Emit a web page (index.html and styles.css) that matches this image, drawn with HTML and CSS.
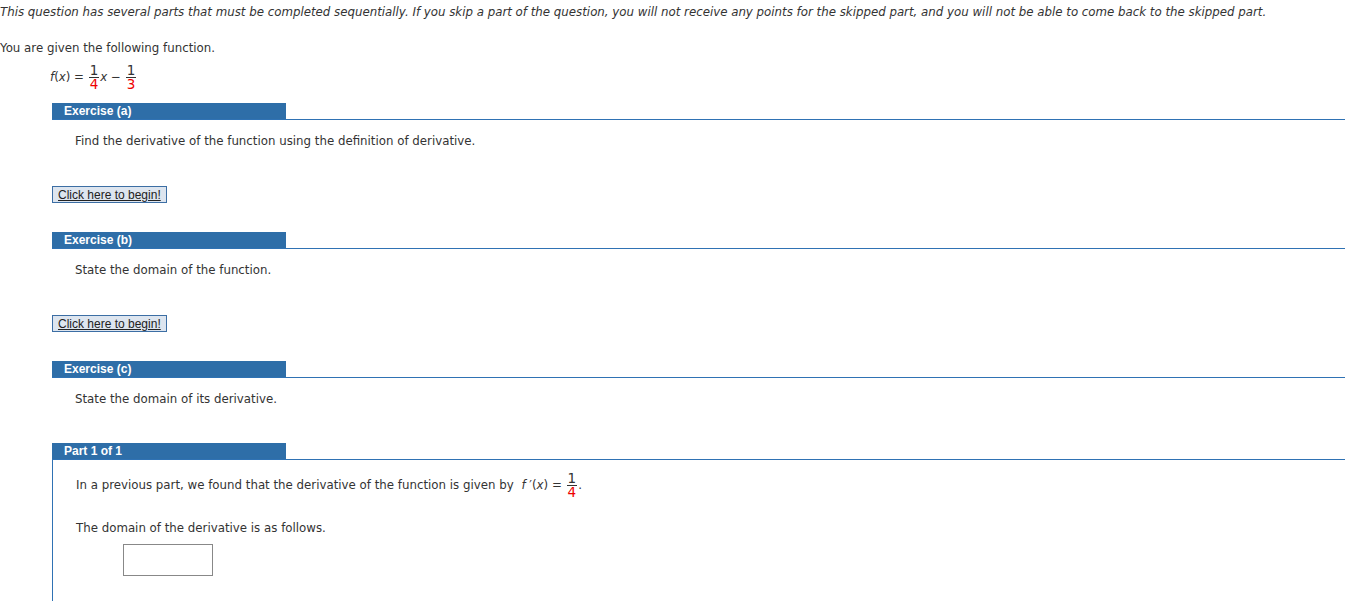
FILE: index.html
```html
<!DOCTYPE html>
<html lang="en">
<head>
    <meta charset="UTF-8">
    <title>Exercise</title>
    <link rel="stylesheet" href="styles.css">
</head>
<body>
    <p class="intro">This question has several parts that must be completed sequentially. If you skip a part of the question, you will not receive any points for the skipped part, and you will not be able to come back to the skipped part.</p>

    <p class="given">You are given the following function.</p>
    <div class="formula"><span class="fn">f</span>(<span class="var">x</span>) = <span class="frac"><span class="num">1</span><span class="den">4</span></span><span class="var">x</span> &minus; <span class="frac"><span class="num">1</span><span class="den">3</span></span></div>

    <!-- Exercise (a) -->
    <div class="exercise first">
        <div class="ex-head"><span class="ex-tab">Exercise (a)</span></div>
        <p class="ex-text">Find the derivative of the function using the definition of derivative.</p>
        <button class="begin">Click here to begin!</button>
    </div>

    <!-- Exercise (b) -->
    <div class="exercise">
        <div class="ex-head"><span class="ex-tab">Exercise (b)</span></div>
        <p class="ex-text">State the domain of the function.</p>
        <button class="begin">Click here to begin!</button>
    </div>

    <!-- Exercise (c) -->
    <div class="exercise">
        <div class="ex-head"><span class="ex-tab">Exercise (c)</span></div>
        <p class="ex-text">State the domain of its derivative.</p>
    </div>

    <div class="part">
        <div class="ex-head"><span class="ex-tab">Part 1 of 1</span></div>
        <div class="part-body">
            <p class="part-text">In a previous part, we found that the derivative of the function is given by <span class="math"><span class="fn">f</span> &prime;(<span class="var">x</span>) = <span class="frac"><span class="num">1</span><span class="den">4</span></span></span>.</p>
            <p class="part-text second">The domain of the derivative is as follows.</p>
            <input class="answer" type="text">
        </div>
    </div>
</body>
</html>
```

FILE: styles.css
```css
body {
    margin: 0;
    font-family: "DejaVu Sans", Verdana, sans-serif;
    font-size: 11.8px;
    color: #333;
    background: #fff;
    overflow: hidden;
}
p {
    margin: 0;
}
.intro {
    font-style: italic;
    padding-top: 4px;
    line-height: 16px;
    white-space: nowrap;
}
.given {
    margin-top: 20px;
    line-height: 16px;
}
.formula {
    margin: 5px 0 0 50px;
    height: 32px;
    line-height: 32px;
}
.fn, .var {
    font-style: italic;
}
.frac {
    display: inline-flex;
    flex-direction: column;
    align-items: center;
    vertical-align: middle;
    line-height: 13px;
    font-size: 13.5px;
    margin: 0 1px;
}
.frac .num {
    border-bottom: 1px solid #333;
    padding: 0 1px;
}
.frac .den {
    color: #e00;
}
.ex-head {
    margin-left: 52px;
    border-bottom: 1px solid #2f72b4;
    display: flex;
}
.ex-tab {
    width: 222px;
    height: 16px;
    line-height: 17px;
    padding-left: 12px;
    background: #2e6ea8;
    color: #fff;
    font-family: "Liberation Sans", Arial, sans-serif;
    font-weight: bold;
    font-size: 12px;
}
.exercise .ex-head {
    margin-top: 29px;
}
.exercise.first .ex-head {
    margin-top: 10px;
}
.ex-text {
    margin: 13px 0 0 75px;
    line-height: 16px;
}
.begin {
    display: block;
    margin: 37px 0 0 52px;
    padding: 0 5px;
    height: 17px;
    background: #dde5ef;
    border: 1px solid #3c6ea4;
    border-radius: 0;
    font-family: "Liberation Sans", Arial, sans-serif;
    font-size: 12px;
    color: #222;
    text-decoration: underline;
    cursor: pointer;
}
.part {
    margin-top: 36px;
}
.part-body {
    margin-left: 52px;
    border-left: 1px solid #2f72b4;
    padding: 12px 0 26px 23px;
}
.part-text {
    line-height: 24px;
}
.part-text.second {
    margin-top: 21px;
    line-height: 16px;
}
.math {
    margin-left: 4px;
}
.answer {
    display: block;
    margin: 8px 0 0 47px;
    padding: 0;
    border: 1px solid #888;
    box-sizing: border-box;
    width: 90px;
    height: 32px;
}
```
